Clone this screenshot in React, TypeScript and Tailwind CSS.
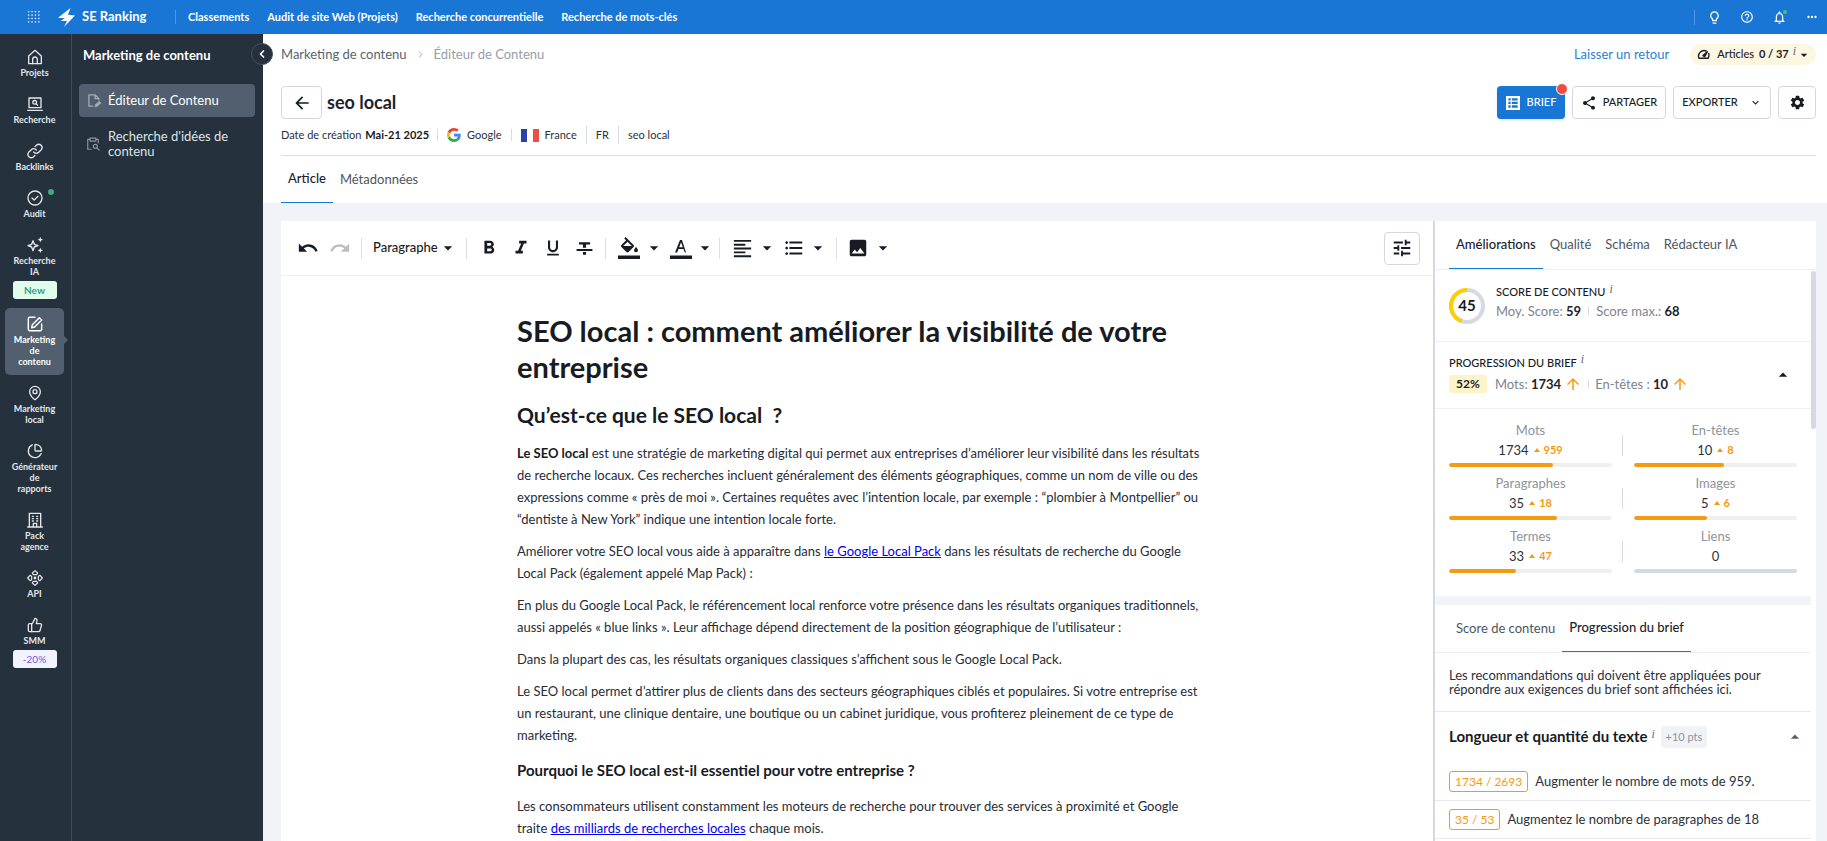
import type { ReactNode } from "react";
import { MdArrowBack, MdArrowDropDown, MdArrowDropUp, MdArrowUpward, MdFormatAlignLeft, MdFormatBold, MdFormatItalic, MdFormatListBulleted, MdFormatUnderlined, MdHelpOutline, MdImage, MdKeyboardArrowDown, MdMoreHoriz, MdNotificationsNone, MdOutlineLightbulb, MdRedo, MdSettings, MdShare, MdTune, MdUndo } from "react-icons/md";
import { ChartPie, ChevronLeft, ChevronRight, MapPin, ThumbsUp } from "lucide-react";

const topLinks = ["Classements", "Audit de site Web (Projets)", "Recherche concurrentielle", "Recherche de mots-clés"];

const line = { fill: "none", stroke: "currentColor", strokeWidth: 2, strokeLinecap: "round", strokeLinejoin: "round" } as const;

const HomeIcon = () => (
  <svg viewBox="0 0 24 24" className="size-4" {...line}>
    <path d="M2.500 10.500 12 2l9.500 8.500V22h-19z" />
    <path d="M8.500 22v-6.500a3.500 3.500 0 0 1 7 0V22" />
  </svg>
);
const LaptopIcon = () => (
  <svg viewBox="0 0 24 24" className="size-4" {...line}>
    <path d="M3 3h18v14.500H3zM1 21.500h22" />
    <circle cx="11.500" cy="9.500" r="2.800" />
    <path d="m13.800 11.800 2 2" />
  </svg>
);
const LinkIcon = () => (
  <svg viewBox="0 0 24 24" className="size-4" {...line}>
    <path d="M10 13.500a5 5 0 0 0 7.500.5l4-4a5 5 0 0 0-7-7l-2.300 2.200" />
    <path d="M14 10.500a5 5 0 0 0-7.500-.5l-4 4a5 5 0 0 0 7 7l2.300-2.200" />
  </svg>
);
const CheckIcon = () => (
  <svg viewBox="0 0 24 24" className="size-4" {...line}>
    <circle cx="12" cy="12" r="10.500" />
    <path d="m7.500 12 3.200 3.200 5.800-5.700" />
  </svg>
);
const SparkIcon = () => (
  <svg viewBox="0 0 24 24" className="size-4">
    <path d="M9 5.500 11 11l5.500 2-5.500 2-2 5.500L7 15l-5.500-2L7 11z" fill="none" stroke="currentColor" strokeWidth="2" strokeLinejoin="round" />
    <path d="m20 0 1.200 2.800L24 4l-2.800 1.200L20 8l-1.200-2.800L16 4l2.800-1.200zM20 16l1.200 2.800L24 20l-2.800 1.200L20 24l-1.200-2.800L16 20l2.800-1.200z" fill="currentColor" />
  </svg>
);
const EditIcon = () => (
  <svg viewBox="0 0 24 24" className="size-4" {...line} strokeWidth={2.2}>
    <path d="M12 2H4a2 2 0 0 0-2 2v16a2 2 0 0 0 2 2h16a2 2 0 0 0 2-2v-8" />
    <path d="M18.500 2.500 8 13l-1 4.500 4.500-1L22 6z" />
  </svg>
);
const BuildingIcon = () => (
  <svg viewBox="0 0 24 24" className="size-4" {...line}>
    <path d="M3.500 22V2h17v20M1 22.500h22M9.500 22v-5h5v5" />
    <path d="M8 6.500h1.500M8 10h1.500M8 13.500h1.500M14.500 6.500H16M14.500 10H16M14.500 13.500H16" />
  </svg>
);
const ApiIcon = () => (
  <svg viewBox="0 0 24 24" className="size-4" {...line} strokeWidth={1.8}>
    <path d="M8 4.500 12 1l4 3.500-1.500 2.500h-5zM8 19.500l4 3.500 4-3.500-1.500-2.500h-5zM4.500 8 1 12l3.500 4L7 14.500v-5zM19.500 8l3.500 4-3.500 4-2.500-1.500v-5z" />
    <circle cx="12" cy="12" r="1.200" fill="currentColor" />
  </svg>
);

type RailItem = { icon: ReactNode; lines: string[]; active?: boolean; dot?: boolean; badge?: "new" | "promo" };
const rail: RailItem[] = [
  { icon: <HomeIcon />, lines: ["Projets"] },
  { icon: <LaptopIcon />, lines: ["Recherche"] },
  { icon: <LinkIcon />, lines: ["Backlinks"] },
  { icon: <CheckIcon />, lines: ["Audit"], dot: true },
  { icon: <SparkIcon />, lines: ["Recherche", "IA"], badge: "new" },
  { icon: <EditIcon />, lines: ["Marketing", "de", "contenu"], active: true },
  { icon: <MapPin className="size-4" />, lines: ["Marketing", "local"] },
  { icon: <ChartPie className="size-4" />, lines: ["Générateur", "de", "rapports"] },
  { icon: <BuildingIcon />, lines: ["Pack", "agence"] },
  { icon: <ApiIcon />, lines: ["API"] },
  { icon: <ThumbsUp className="size-4" />, lines: ["SMM"], badge: "promo" },
];

const InfoMark = ({ className = "" }: { className?: string }) => (
  <span className={`ml-1 self-start font-['Liberation_Serif',serif] text-[12px] leading-3 font-normal italic text-[#5f6673] ${className}`}>i</span>
);

function TopBar() {
  return (
    <header className="flex h-[34px] shrink-0 items-center bg-[#1976d5] text-white">
      <button aria-label="Applications" className="ml-7">
        <svg viewBox="0 0 12 12" className="size-3" fill="currentColor">
          {[0, 3.4, 6.8, 10.2].flatMap((x) => [0, 3.4, 6.8, 10.2].map((y) => <rect key={`${x}-${y}`} x={x} y={y} width="1.3" height="1.3" />))}
        </svg>
      </button>
      <a href="#accueil" className="ml-[18px] flex w-[117px] items-center text-[13px] font-bold">
        <svg viewBox="0 0 17 19" className="mr-[7px] h-[19px] w-[17px]" fill="currentColor">
          <path d="M12.500 0 0 9.700l6.800.5L2.800 13H9l-3 6L17 7.400l-7-.6z" />
        </svg>
        SE Ranking
      </a>
      <nav className="flex items-center gap-[18px] border-l border-[#4f97e0] pl-3 text-[11px] leading-[14px] font-bold">
        {topLinks.map((t) => <a key={t} href="#nav">{t}</a>)}
      </nav>
      <div className="ml-auto flex items-center gap-[18px] border-l border-[#4f97e0] pr-2 pl-3">
        <button aria-label="Idées"><MdOutlineLightbulb className="size-[15px]" /></button>
        <button aria-label="Aide"><MdHelpOutline className="size-[14px]" /></button>
        <button aria-label="Notifications" className="relative">
          <MdNotificationsNone className="size-[15px]" />
          <span className="absolute top-0 right-0 size-1 rounded-full bg-[#4fbf6b]" />
        </button>
        <button aria-label="Plus"><MdMoreHoriz className="size-[14px]" /></button>
      </div>
    </header>
  );
}

function Rail() {
  return (
    <nav className="flex w-[72px] shrink-0 flex-col gap-0.5 border-r border-[#414c58] pt-[7px] pl-[5px] text-[#e3e7eb]">
      {rail.map((it) => (
        <a key={it.lines.join(" ")} href="#menu" className={`relative flex w-[59px] flex-col items-center rounded-[5px] pt-2 text-[9px] leading-[11px] font-bold ${it.badge ? "pb-[7px]" : "pb-2"} ${it.active ? "bg-[#515f6e] text-white" : ""}`}>
          {it.icon}
          {it.dot && <span className="absolute top-[7px] right-[10px] size-[6px] rounded-full bg-[#3fae74]" />}
          <span className="mt-[2px] flex flex-col items-center">{it.lines.map((l) => <span key={l}>{l}</span>)}</span>
          {it.badge === "new" && <span className="mt-1 w-11 rounded-[3px] bg-[#e1fbec] text-center text-[10px] leading-[18px] text-[#35a077]">New</span>}
          {it.badge === "promo" && <span className="mt-1 w-11 rounded-[3px] bg-[#f1f3fe] text-center text-[10px] leading-[18px] font-normal text-[#7a55d6]">-20%</span>}
          {it.active && <span className="absolute top-7 -right-1 border-y-[4px] border-l-[4px] border-y-transparent border-l-[#515f6e]" />}
        </a>
      ))}
    </nav>
  );
}

function SidePanel() {
  return (
    <aside className="relative w-[191px] shrink-0 pr-2 pl-[7px] text-[13px]">
      <h2 className="mt-3 pl-1 leading-[18px] font-bold text-white">Marketing de contenu</h2>
      <a href="#editeur" className="mt-5 flex h-[33px] items-center gap-[6px] rounded-[4px] bg-[#515f6e] pl-2 text-white">
        <svg viewBox="0 0 24 24" className="size-[15px] text-[#a7aeb6]" {...line}>
          <path d="M9 21H3V3h10l6 6v2M13 3v6h6" />
          <path d="m20 13.500 2.500 2.500-6.500 5.500-3.500.5.800-3.200z" fill="currentColor" strokeWidth="1" />
        </svg>
        Éditeur de Contenu
      </a>
      <a href="#idees" className="mt-3 flex items-center gap-2 pl-[7px] leading-[15px] text-[#dfe3e7]">
        <svg viewBox="0 0 24 24" className="size-[14px] shrink-0 text-[#8d959d]" {...line}>
          <path d="M9 21H3V4h4M17 4h4v6M7 2h10v5H7z" />
          <circle cx="16" cy="16" r="3.500" />
          <path d="m19 19 3.500 3.500" />
        </svg>
        <span>Recherche d'idées de<br />contenu</span>
      </a>
      <button aria-label="Réduire le menu" className="absolute top-[9px] -right-[10px] z-10 flex size-[22px] items-center justify-center rounded-full border border-[#4a4f5c] bg-[#25313d] text-white">
        <ChevronLeft className="size-3" strokeWidth={3.5} />
      </button>
    </aside>
  );
}

const Sep = ({ tall = false }: { tall?: boolean }) => <span className={`w-px bg-[#d8d9e3] ${tall ? "h-[18px]" : "h-3"}`} />;

function PageHead() {
  return (
    <div className="shrink-0 bg-white pr-[11px] pl-[18px]">
      <div className="flex h-[41px] items-center text-[13px]">
        <a href="#marketing" className="text-[#57646f]">Marketing de contenu</a>
        <ChevronRight className="mx-[8px] size-[11px] text-[#a2a8ae]" />
        <span className="text-[#989ea5]">Éditeur de Contenu</span>
        <a href="#retour" className="ml-auto text-[#2f80cf]">Laisser un retour</a>
        <button className="ml-[21px] flex h-[21px] items-center rounded-full bg-[#fdf6e1] pr-1 pl-[7px] text-[11px] font-bold text-[#1b2029]">
          <svg viewBox="0 0 24 24" className="mr-[7px] size-[13px]" {...line} strokeWidth={2.6}>
            <path d="M17 5.500A10.500 10.500 0 0 0 3.500 19h17A10.500 10.500 0 0 0 21.500 10" />
            <path d="m11 14 8-7-5 9z" fill="currentColor" />
          </svg>
          <span className="mr-[5px] font-medium">Articles</span> 0 / 37
          <InfoMark className="mt-px" />
          <MdArrowDropDown className="size-4" />
        </button>
      </div>
      <div className="mt-[11px] flex h-[33px] items-center">
        <button aria-label="Retour" className="flex h-[33px] w-[41px] items-center justify-center rounded-[4px] border border-[#d6d6e2] text-[#171b24]"><MdArrowBack className="size-5" /></button>
        <h1 className="ml-[5px] text-[18px] font-bold text-[#1d222c]">seo local</h1>
        <div className="ml-auto flex h-[33px] gap-[7px] text-[11px] font-bold text-[#171b24]">
          <button className="relative flex w-[68px] items-center justify-center gap-[7px] rounded-[4px] bg-[#1976d5] font-medium text-white shadow-sm">
            <svg viewBox="0 0 24 24" className="size-[14px]">
              <path fill="currentColor" fillRule="evenodd" d="M0 0h24v24H0zM4 4v3.500h4V4zm6 0v3.500h10V4zM4 9.800v4h4v-4zm6 0v4h10v-4zM4 16v4h4v-4zm6 0v4h10v-4z" />
            </svg>
            BRIEF
            <span className="absolute -top-[3px] -right-[3px] size-[12px] rounded-full border border-white bg-[#ee4c42]" />
          </button>
          <button className="flex w-[94px] items-center justify-center gap-[6px] rounded-[4px] border border-[#d6d6e2] font-medium"><MdShare className="size-4" />PARTAGER</button>
          <button className="flex w-[98px] items-center justify-center gap-[11px] rounded-[4px] border border-[#d6d6e2] font-medium">EXPORTER<MdKeyboardArrowDown className="size-[13px]" /></button>
          <button aria-label="Paramètres" className="flex w-[38px] items-center justify-center rounded-[4px] border border-[#d6d6e2]"><MdSettings className="size-[17px]" /></button>
        </div>
      </div>
      <div className="mt-[6px] flex h-[31px] items-center border-b border-[#dddee7] pb-[10px] text-[11px] text-[#2b313b]">
        Date de création <b className="ml-1 text-[#171b24]">Mai-21 2025</b>
        <span className="w-2" /><Sep /><span className="w-[9px]" />
        <svg viewBox="0 0 48 48" className="mr-[6px] size-[14px]">
          <path fill="#EA4335" d="M24 9.500c3.540 0 6.710 1.220 9.210 3.600l6.850-6.850C35.900 2.380 30.470 0 24 0 14.620 0 6.510 5.380 2.560 13.220l7.980 6.190C12.430 13.720 17.740 9.500 24 9.500z" />
          <path fill="#4285F4" d="M46.980 24.550c0-1.570-.15-3.090-.38-4.550H24v9.020h12.940c-.58 2.960-2.260 5.480-4.780 7.180l7.730 6c4.510-4.180 7.090-10.360 7.090-17.650z" />
          <path fill="#FBBC05" d="M10.530 28.590c-.48-1.450-.76-2.990-.76-4.590s.27-3.140.76-4.590l-7.980-6.190C.92 16.460 0 20.120 0 24c0 3.880.92 7.540 2.560 10.780l7.970-6.190z" />
          <path fill="#34A853" d="M24 48c6.480 0 11.930-2.130 15.890-5.810l-7.730-6c-2.150 1.450-4.920 2.300-8.160 2.300-6.260 0-11.570-4.220-13.470-9.910l-7.980 6.190C6.510 42.620 14.620 48 24 48z" />
        </svg>
        Google
        <span className="w-[9px]" /><Sep /><span className="w-[9px]" />
        <span className="mr-[6px] flex h-[13px] w-[18px]"><i className="flex-1 bg-[#2a41ad]" /><i className="flex-1 bg-white" /><i className="flex-1 bg-[#f04c4a]" /></span>
        France
        <span className="w-[9px]" /><Sep tall /><span className="w-[9px]" />FR
        <span className="w-[9px]" /><Sep tall /><span className="w-[9px]" />seo local
      </div>
      <div role="tablist" className="flex h-[47px] text-[13px]">
        <button role="tab" aria-selected="true" className="border-b border-[#1976d5] px-[7px] font-medium text-[#1d222c]">Article</button>
        <button role="tab" aria-selected="false" className="px-[7px] text-[#4e555f]">Métadonnées</button>
      </div>
    </div>
  );
}

const Tool = ({ label, children, className = "w-8" }: { label: string; children: ReactNode; className?: string }) => (
  <button aria-label={label} className={`flex items-center justify-center ${className}`}>{children}</button>
);
const ToolSep = () => <span className="h-[21px] w-px bg-[#dcdde5]" />;
const Caret = () => <MdArrowDropDown className="size-5 shrink-0" />;

function Toolbar() {
  return (
    <div className="flex h-[55px] shrink-0 items-center border-b border-[#eeeff4] pr-[13px] pl-[11px] text-[#171b24]">
      <Tool label="Annuler"><MdUndo className="size-[22px]" /></Tool>
      <Tool label="Rétablir"><MdRedo className="size-[22px] text-[#bcbec4]" /></Tool>
      <span className="w-[5px]" /><ToolSep />
      <button className="mr-2 ml-[11px] flex items-center text-[13px] font-medium">Paragraphe<Caret /></button>
      <ToolSep /><span className="w-[6px]" />
      <Tool label="Gras"><MdFormatBold className="size-[22px]" /></Tool>
      <Tool label="Italique"><MdFormatItalic className="size-[22px]" /></Tool>
      <Tool label="Souligné"><MdFormatUnderlined className="size-5" /></Tool>
      <Tool label="Barré"><svg viewBox="0 0 24 24" className="size-[19px]" fill="currentColor"><path d="M10 20h4v-3.500h-4zM5 4v3h5v4h4V7h5V4zM2 15h20v-2.500H2z" /></svg></Tool>
      <span className="w-1" /><ToolSep /><span className="w-[7px]" />
      <Tool label="Surlignage" className="w-[56px]">
        <svg viewBox="0 0 24 24" className="size-6 shrink-0" fill="currentColor">
          <path d="M16.560 8.940 8.620 1 7.210 2.410l1.880 1.880-4.650 4.650c-.59.59-.59 1.540 0 2.120l5 5c.29.29.68.44 1.060.44s.77-.15 1.060-.44l5-5c.59-.58.59-1.530 0-2.120zM6.210 10 10.500 5.710 14.790 10zM19 11s-2 2-2 3.300a2 2 0 0 0 4 0C21 13 19 11 19 11zM1 19.500h22V23H1z" />
        </svg>
        <span className="w-[3px]" /><Caret />
      </Tool>
      <Tool label="Couleur du texte" className="w-[46px]">
        <svg viewBox="0 0 24 24" className="size-6 shrink-0" fill="currentColor">
          <path d="M1 19.500h22V23H1zm5-3h2.200l1.300-3.500h5l1.300 3.500H17L13 4h-2zm4.200-5.300L12 6.200l1.800 5z" />
        </svg>
        <span className="w-[2px]" /><Caret />
      </Tool>
      <span className="w-[4px]" /><ToolSep /><span className="w-[10px]" />
      <Tool label="Alignement" className="w-[49px]"><MdFormatAlignLeft className="size-[23px] shrink-0" /><span className="w-[3px]" /><Caret /></Tool>
      <span className="w-[2px]" />
      <Tool label="Liste" className="w-[49px]"><MdFormatListBulleted className="size-[22px] shrink-0" /><span className="w-[3px]" /><Caret /></Tool>
      <span className="w-[6px]" /><ToolSep /><span className="w-[8px]" />
      <Tool label="Image" className="w-[50px]"><MdImage className="size-[22px] shrink-0" /><span className="w-[4px]" /><Caret /></Tool>
      <button aria-label="Options de l'éditeur" className="ml-auto flex h-[33px] w-9 items-center justify-center rounded-[4px] border border-[#d6d6e2]"><MdTune className="size-[22px]" /></button>
    </div>
  );
}

function Article() {
  return (
    <article className="mx-auto w-[680px] max-w-full pt-[37px] text-[13px] leading-[22px] whitespace-nowrap text-[#272c36]">
      <h1 className="text-[29px] leading-9 font-bold text-[#171b24]">SEO local : comment améliorer la visibilité de votre<br />entreprise</h1>
      <h2 className="mt-4 text-[21px] leading-[28px] font-bold text-[#171b24]">Qu’est-ce que le SEO local &nbsp;?</h2>
      <p className="mt-[13px]"><b className="text-[#171b24]">Le SEO local</b> est une stratégie de marketing digital qui permet aux entreprises d’améliorer leur visibilité dans les résultats<br />de recherche locaux. Ces recherches incluent généralement des éléments géographiques, comme un nom de ville ou des<br />expressions comme « près de moi ». Certaines requêtes avec l’intention locale, par exemple : “plombier à Montpellier” ou<br />“dentiste à New York” indique une intention locale forte.</p>
      <p className="mt-[10px]">Améliorer votre SEO local vous aide à apparaître dans <a href="#pack" className="text-[#0000ee] underline">le Google Local Pack</a> dans les résultats de recherche du Google<br />Local Pack (également appelé Map Pack) :</p>
      <p className="mt-[10px]">En plus du Google Local Pack, le référencement local renforce votre présence dans les résultats organiques traditionnels,<br />aussi appelés « blue links ». Leur affichage dépend directement de la position géographique de l’utilisateur :</p>
      <p className="mt-[10px]">Dans la plupart des cas, les résultats organiques classiques s’affichent sous le Google Local Pack.</p>
      <p className="mt-[10px]">Le SEO local permet d’attirer plus de clients dans des secteurs géographiques ciblés et populaires. Si votre entreprise est<br />un restaurant, une clinique dentaire, une boutique ou un cabinet juridique, vous profiterez pleinement de ce type de<br />marketing.</p>
      <h3 className="mt-[13px] text-[15px] leading-[22px] font-bold text-[#171b24]">Pourquoi le SEO local est-il essentiel pour votre entreprise ?</h3>
      <p className="mt-[14px]">Les consommateurs utilisent constamment les moteurs de recherche pour trouver des services à proximité et Google<br />traite <a href="#recherches" className="text-[#0000ee] underline">des milliards de recherches locales</a> chaque mois.</p>
    </article>
  );
}

const metrics = [
  { name: "Mots", value: "1734", delta: "959", pct: 64 },
  { name: "En-têtes", value: "10", delta: "8", pct: 55 },
  { name: "Paragraphes", value: "35", delta: "18", pct: 66 },
  { name: "Images", value: "5", delta: "6", pct: 45 },
  { name: "Termes", value: "33", delta: "47", pct: 41 },
  { name: "Liens", value: "0", delta: "", pct: 0 },
];

const tips = [
  { count: "1734 / 2693", text: "Augmenter le nombre de mots de 959." },
  { count: "35 / 53", text: "Augmentez le nombre de paragraphes de 18" },
];

function Improvements() {
  return (
    <section className="flex w-[383px] shrink-0 flex-col border-l-2 border-[#d6d8e4] bg-white text-[13px]">
      <div role="tablist" className="flex h-[49px] shrink-0 border-b border-[#eeeff4] pl-[14px] text-[#4e555f]">
        <button role="tab" aria-selected="true" className="border-b border-[#1976d5] px-[7px] font-medium text-[#1d222c]">Améliorations</button>
        {["Qualité", "Schéma", "Rédacteur IA"].map((t) => <button key={t} role="tab" aria-selected="false" className="px-[7px]">{t}</button>)}
      </div>
      <div className="flex min-h-0 flex-1 overflow-hidden">
        <div className="min-w-0 flex-1">
          <div className="flex h-[72px] items-center border-b border-[#eeeff4] pl-[14px]">
            <div className="relative flex size-9 items-center justify-center text-[15px] font-bold text-[#171b24]">
              <svg viewBox="0 0 36 36" className="absolute inset-0" fill="none" strokeWidth="4">
                <circle cx="18" cy="18" r="16" stroke="#d6d8e4" />
                <path d="M18 2a16 16 0 0 0-5 31.200" stroke="#fad000" />
              </svg>
              <span className="relative">45</span>
            </div>
            <div className="-mt-2 ml-[11px] text-[#7d848d]">
              <div className="flex text-[11px] leading-[18px] font-medium text-[#171b24]">SCORE DE CONTENU<InfoMark /></div>
              <div className="flex items-center leading-5">Moy. Score:&nbsp;<b className="text-[#1d222c]">59</b><span className="mx-[7px] h-2 w-px bg-[#d6d8e4]" />Score max.:&nbsp;<b className="text-[#1d222c]">68</b></div>
            </div>
          </div>
          <div className="flex h-[67px] items-center justify-between border-b border-[#eeeff4] pr-[18px] pl-[14px] text-[#7d848d]">
            <div className="pb-1">
              <div className="flex text-[11px] leading-[20px] font-medium text-[#171b24]">PROGRESSION DU BRIEF<InfoMark /></div>
              <div className="mt-[2px] flex items-center leading-[18px]">
                <span className="mr-2 w-[38px] rounded-[3px] bg-[#fdf3c8] text-center text-[12px] font-bold text-[#1d222c]">52%</span>
                Mots:&nbsp;<b className="text-[#1d222c]">1734</b><MdArrowUpward className="mx-[3px] size-[18px] text-[#f59a11]" />
                <span className="mr-[6px] ml-[3px] h-2 w-px bg-[#d6d8e4]" />
                En-têtes :&nbsp;<b className="text-[#1d222c]">10</b><MdArrowUpward className="ml-[3px] size-[18px] text-[#f59a11]" />
              </div>
            </div>
            <button aria-label="Replier la progression" className="text-[#171b24]"><MdArrowDropUp className="size-5" /></button>
          </div>
          <div className="relative grid h-[187px] grid-cols-2 content-start gap-x-[22px] pt-[11px] pr-[14px] pl-[14px]">
            {metrics.map((m, i) => (
              <div key={m.name} className={`relative h-[53px] text-center ${i % 2 ? "" : "after:absolute after:top-[15px] after:-right-[11px] after:h-[21px] after:w-px after:bg-[#d9dbe3]"}`}>
                <div className="leading-5 text-[#8d939b]">{m.name}</div>
                <div className="flex h-5 items-center justify-center leading-5 text-[#2b313b]">
                  {m.value}
                  {m.delta && <><span className="mr-1 ml-[5px] border-x-[3px] border-b-[4px] border-x-transparent border-b-[#f59a11]" /><span className="text-[11px] font-bold text-[#f59a11]">{m.delta}</span></>}
                </div>
                <div className={`mt-[3px] h-1 overflow-hidden rounded-full ${m.delta ? "bg-[#efefef]" : "bg-[#d6d8e4]"}`}>
                  <div className="h-full rounded-full bg-[#f59a11]" style={{ width: `${m.pct}%` }} />
                </div>
              </div>
            ))}
          </div>
          <div className="h-[9px] bg-[#f2f3f9]" />
          <div role="tablist" className="flex h-[48px] border-b border-[#eeeff4] pl-[14px]">
            <button role="tab" aria-selected="false" className="px-[7px] text-[#4e555f]">Score de contenu</button>
            <button role="tab" aria-selected="true" className="border-b border-[#1976d5] px-[7px] font-medium text-[#1d222c]">Progression du brief</button>
          </div>
          <p className="h-[59px] border-b border-[#e8e9ee] pt-[15px] pl-[14px] leading-[14px] text-[#2b313b]">Les recommandations qui doivent être appliquées pour<br />répondre aux exigences du brief sont affichées ici.</p>
          <div className="flex h-[51px] items-center pr-[6px] pb-[2px] pl-[14px]">
            <h3 className="text-[15px] font-bold text-[#171b24]">Longueur et quantité du texte</h3>
            <InfoMark className="mt-[16px]" />
            <span className="ml-[6px] w-[46px] rounded-[3px] bg-[#f1f2f7] text-center text-[11px] leading-[22px] text-[#8d939b]">+10 pts</span>
            <button aria-label="Replier la section" className="ml-auto text-[#5a606b]"><MdArrowDropUp className="size-5" /></button>
          </div>
          <ul>
            {tips.map((t) => (
              <li key={t.count} className="flex h-[38px] items-center gap-[7px] border-b border-[#e8e9ee] pl-[14px] text-[#2b313b]">
                <span className="rounded-[3px] border border-[#f59a11] px-[5px] text-[12px] leading-[19px] text-[#f59a11]">{t.count}</span>{t.text}
              </li>
            ))}
          </ul>
        </div>
        <div className="w-[5px] shrink-0 pt-px"><div className="h-[158px] rounded-full bg-[#d6d8e4]" /></div>
      </div>
    </section>
  );
}

export default function App() {
  return (
    <div className="flex h-screen flex-col overflow-hidden font-['Lato','Noto_Sans',sans-serif]">
      <TopBar />
      <div className="flex min-h-0 flex-1 bg-[#25313d]">
        <Rail />
        <SidePanel />
        <main className="flex min-w-0 flex-1 flex-col bg-[#f2f3f9]">
          <PageHead />
          <div className="mt-[18px] mr-[11px] ml-[18px] flex min-h-0 flex-1">
            <section className="flex min-w-0 flex-1 flex-col overflow-hidden bg-white">
              <Toolbar />
              <Article />
            </section>
            <Improvements />
          </div>
        </main>
      </div>
    </div>
  );
}
